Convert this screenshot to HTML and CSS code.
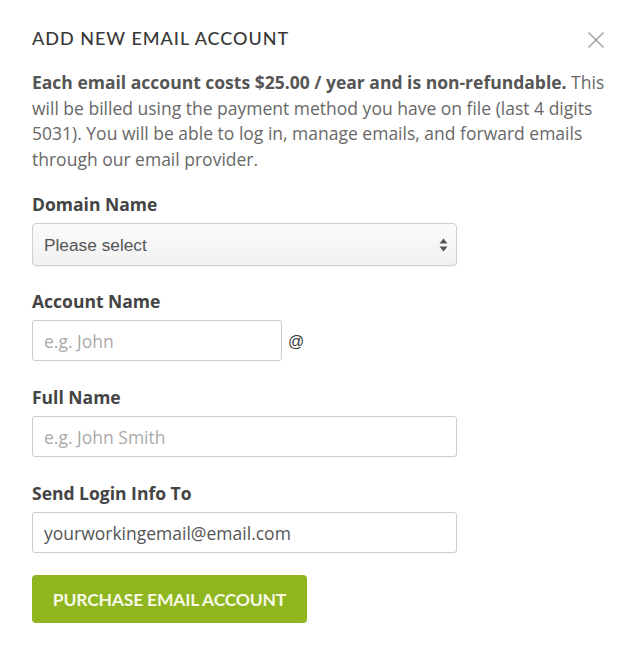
FILE: index.html
```html
<!DOCTYPE html>
<html lang="en">
<head>
<meta charset="utf-8">
<title>Add New Email Account</title>
<link rel="stylesheet" href="styles.css">
</head>
<body>
<div class="modal">
  <div class="modal-header">
    <h1 class="modal-title">ADD NEW EMAIL ACCOUNT</h1>
    <button class="close-btn" aria-label="Close">
      <svg width="16" height="16" viewBox="0 0 16 16"><path d="M0.5 0.5 L15.5 15.5 M15.5 0.5 L0.5 15.5" stroke="#9a9a9a" stroke-width="1.3" fill="none"/></svg>
    </button>
  </div>
  <p class="intro"><strong>Each email account costs $25.00 / year and is non-refundable.</strong> This will be billed using the payment method you have on file (last 4 digits 5031). You will be able to log in, manage emails, and forward emails through our email provider.</p>

  <form class="form">
    <div class="field field-select">
      <label class="label">Domain Name</label>
      <div class="select-wrap">
        <select class="select"><option>Please select</option></select>
        <svg class="select-arrows" width="9" height="14" viewBox="0 0 9 14"><path d="M4.5 0.5 L8.5 5.5 L0.5 5.5 Z M0.5 8.5 L8.5 8.5 L4.5 13.5 Z" fill="#555"/></svg>
      </div>
    </div>
    <div class="field">
      <label class="label">Account Name</label>
      <div class="account-row">
        <input class="input input-short" type="text" placeholder="e.g. John">
        <span class="at">@</span>
      </div>
    </div>
    <div class="field">
      <label class="label">Full Name</label>
      <input class="input" type="text" placeholder="e.g. John Smith">
    </div>
    <div class="field field-last">
      <label class="label">Send Login Info To</label>
      <input class="input" type="text" value="yourworkingemail@email.com">
    </div>
    <button type="button" class="purchase-btn">PURCHASE EMAIL ACCOUNT</button>
  </form>
</div>
</body>
</html>
```

FILE: styles.css
```css
* { box-sizing: border-box; }
html, body { margin: 0; padding: 0; background: #fff; }
body { font-family: "Open Sans", "Liberation Sans", sans-serif; }

.modal {
  padding: 27px 30px 0 32px;
}

.modal-header {
  display: flex;
  justify-content: space-between;
  align-items: flex-start;
}
.modal-title {
  margin: 0;
  font-family: Lato, "Open Sans", sans-serif;
  font-weight: 500;
  font-size: 18px;
  line-height: 22px;
  color: #383838;
  letter-spacing: 1px;
}
.close-btn {
  border: 0;
  background: none;
  padding: 0;
  margin-top: 5px;
  margin-right: 8px;
  width: 16px;
  height: 16px;
  display: block;
  cursor: pointer;
}
.close-btn svg { display: block; }

.intro {
  margin: 21px 0 0 0;
  font-size: 17.5px;
  line-height: 25.5px;
  color: #686868;
}
.intro strong {
  font-weight: 700;
  color: #555;
}

.form {
  margin-top: 20px;
  width: 425px;
  display: flex;
  flex-direction: column;
}
.field {
  display: flex;
  flex-direction: column;
  margin-bottom: 24px;
}
.field-select { margin-bottom: 23px; }
.field-last { margin-bottom: 22px; }
.label {
  font-weight: 700;
  font-size: 17.5px;
  line-height: 24px;
  color: #444;
  margin-bottom: 7px;
}

.select-wrap { position: relative; }
.select {
  -webkit-appearance: none;
  appearance: none;
  width: 425px;
  height: 43px;
  border: 1px solid #cfcfcf;
  border-radius: 4px;
  background: linear-gradient(#fbfbfb, #f1f1f1);
  font-family: "Liberation Sans", Arial, sans-serif;
  font-size: 17.3px;
  color: #555;
  padding: 0 11px;
  box-shadow: 0 1px 1px rgba(0,0,0,0.06);
}
.select-arrows {
  position: absolute;
  right: 9px;
  top: 15px;
  pointer-events: none;
}

.account-row {
  display: flex;
  align-items: center;
}
.input {
  width: 425px;
  height: 41px;
  border: 1px solid #cccccc;
  border-radius: 3px;
  padding: 0 11px;
  font-family: "Open Sans", sans-serif;
  font-size: 17.5px;
  color: #555;
  background: #fff;
}
.input::placeholder { color: #aaa; }
.input-short { width: 250px; }
.at {
  margin-left: 6px;
  font-family: "Liberation Sans", Arial, sans-serif;
  font-size: 16px;
  color: #333;
  margin-top: 2px;
}

.purchase-btn {
  align-self: flex-start;
  width: 275px;
  height: 48px;
  border: 0;
  border-radius: 4px;
  background: #8fb51f;
  color: #f6f9e6;
  font-family: Lato, "Open Sans", sans-serif;
  font-weight: 700;
  font-size: 17.5px;
  letter-spacing: -0.2px;
  padding: 0;
  cursor: pointer;
}
```
